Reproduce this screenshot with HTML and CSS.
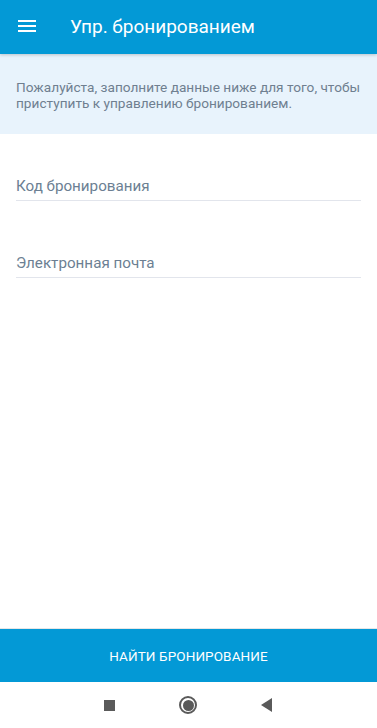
FILE: index.html
```html
<!DOCTYPE html>
<html lang="ru">
<head>
<meta charset="utf-8">
<title>Упр. бронированием</title>
<link rel="stylesheet" href="styles.css">
</head>
<body>
<div class="screen">
  <header class="appbar">
    <svg class="menu" width="20" height="16" viewBox="0 0 20 16">
      <rect x="1" y="2" width="18" height="2" fill="#fff"/>
      <rect x="1" y="7" width="18" height="2" fill="#fff"/>
      <rect x="1" y="12" width="18" height="2" fill="#fff"/>
    </svg>
    <h1 class="title">Упр. бронированием</h1>
  </header>
  <div class="info">Пожалуйста, заполните данные ниже для того, чтобы приступить к управлению бронированием.</div>
  <main class="form">
    <div class="field">Код бронирования</div>
    <div class="field">Электронная почта</div>
  </main>
  <button class="action">НАЙТИ БРОНИРОВАНИЕ</button>
  <nav class="sysnav">
    <span class="sq"></span>
    <span class="home"></span>
    <svg class="back" width="12" height="14" viewBox="0 0 12 14"><polygon points="11,0 11,14 0,7" fill="#5a5a5a"/></svg>
  </nav>
</div>
</body>
</html>
```

FILE: styles.css
```css
* { box-sizing: border-box; }
html, body { margin: 0; padding: 0; }
body { font-family: Roboto, "Noto Sans", sans-serif; background: #fff; }
.screen { width: 377px; height: 728px; display: flex; flex-direction: column; }
.appbar {
  height: 54px; background: #0399d6; display: flex; align-items: center;
  padding-left: 17px; flex-shrink: 0;
  box-shadow: 0 1px 3px rgba(0,0,0,0.2); position: relative; z-index: 1;
}
.menu { display: block; margin-top: -2px; }
.title { margin: 0 0 0 33px; font-size: 19px; font-weight: 400; color: #fff; margin-top: -2px; }
.info {
  background: #e8f3fc; height: 80px; padding: 25px 16px 0 16px;
  font-size: 13.65px; line-height: 16px; color: #6f7f90; flex-shrink: 0;
}
.form { flex: 1; padding: 42px 16px 0 16px; display: flex; flex-direction: column; gap: 52px; }
.field {
  font-size: 15.2px; line-height: 18px; color: #6c7f93; height: 25px; padding-top: 1px;
  border-bottom: 1px solid #e2e5ec;
}
.action {
  height: 54px; border: 0; background: #0399d6; color: #fff; margin: 0;
  font-family: Roboto, "Noto Sans", sans-serif; font-size: 13.5px; letter-spacing: 0.1px;
  border-top: 1px solid #e6e6e6; flex-shrink: 0;
}
.sysnav { height: 46px; display: flex; align-items: center; justify-content: center; position: relative; flex-shrink: 0; }
.sq { width: 11px; height: 11px; background: #5a5a5a; margin-right: 64px; }
.home { width: 18px; height: 18px; border-radius: 50%; border: 2px solid #5a5a5a; display: flex; align-items: center; justify-content: center; margin-right: 64px; }
.home::after { content: ""; width: 11px; height: 11px; border-radius: 50%; background: #5a5a5a; }
.back { display: block; }
```
